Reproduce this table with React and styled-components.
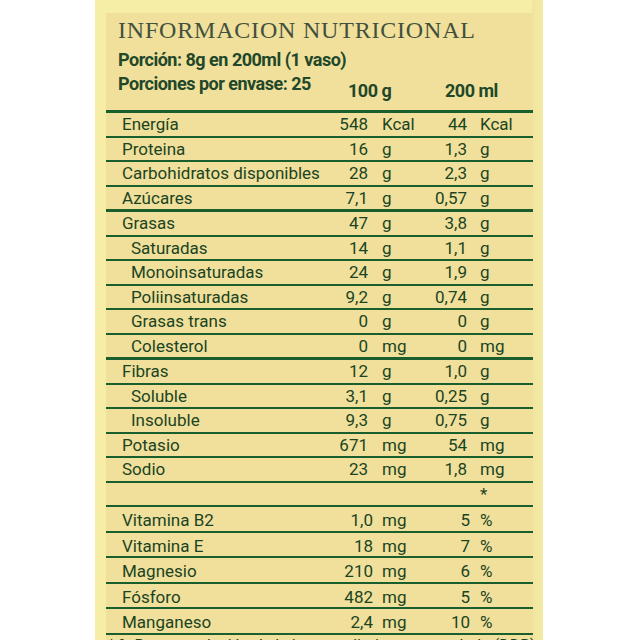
import React from "react";
import styled, { createGlobalStyle, css } from "styled-components";

const Global = createGlobalStyle`
  html, body { margin: 0; padding: 0; background: #ffffff; }
  body { font-family: Roboto, "Liberation Sans", sans-serif; }
`;

const Page = styled.div`
  width: 640px;
  height: 640px;
  overflow: hidden;
  display: flex;
  padding-left: 95px;
  box-sizing: border-box;
`;

const Label = styled.div`
  width: 448px;
  height: 640px;
  box-sizing: border-box;
  padding: 13px 10px 0 11px;
  background: linear-gradient(to right, #f6eea6 0, #f6eea6 436px, #f1e59f 438px, #f4eba3 448px);
  display: flex;
  flex-direction: column;
`;

const Inner = styled.div`
  flex: 1;
  background: #f0e09b;
  display: flex;
  flex-direction: column;
  color: #1b4423;
`;

const Title = styled.h1`
  margin: 3px 0 4px 12px;
  font-family: "Liberation Serif", "Times New Roman", serif;
  font-weight: normal;
  font-size: 24px;
  line-height: 28px;
  letter-spacing: 0.8px;
  color: #43503e;
`;

const boldLine = css`
  font-weight: 700;
  font-size: 18px;
  line-height: 24px;
  letter-spacing: -0.5px;
  color: #22472a;
`;

const Serving = styled.div`
  padding-left: 12px;
  ${boldLine}
`;

const HeadRow = styled.div`
  display: grid;
  grid-template-columns: 230px 97px auto;
  padding-left: 12px;
  margin-bottom: 7px;
  ${boldLine}
`;

const ColHead = styled.div`
  padding-top: 7px;
`;

const Table = styled.div`
  border-top: 3px solid #1b5e2d;
  display: flex;
  flex-direction: column;
`;

const gridTop = css`
  grid-template-columns: 196px 66px 56px 43px 66px;
`;
const gridVit = css`
  grid-template-columns: 196px 71px 54px 43px 63px;
`;

const Row = styled.div`
  display: grid;
  ${(p) => (p.$vit ? gridVit : gridTop)}
  height: ${(p) => (p.$vit ? "21.5px" : "22.5px")};
  padding-top: ${(p) => (p.$vit ? "2px" : "0")};
  border-bottom: ${(p) => (p.$thick ? "3px" : "2px")} solid #1b5e2d;
  font-size: 17px;
  line-height: 22.5px;
  box-sizing: content-box;
`;

const Name = styled.div`
  padding-left: ${(p) => (p.$sub ? "25px" : "16px")};
  white-space: nowrap;
`;

const Num = styled.div`
  text-align: right;
`;

const Unit = styled.div`
  padding-left: ${(p) => p.$pl}px;
`;

const Foot = styled.div`
  margin-top: 1px;
  padding-left: 2px;
  font-size: 16px;
  line-height: 20px;
  white-space: nowrap;
`;

const nutrients = [
  { n: "Energía", a: "548", au: "Kcal", b: "44", bu: "Kcal" },
  { n: "Proteina", a: "16", au: "g", b: "1,3", bu: "g" },
  { n: "Carbohidratos disponibles", a: "28", au: "g", b: "2,3", bu: "g" },
  { n: "Azúcares", a: "7,1", au: "g", b: "0,57", bu: "g", thick: true },
  { n: "Grasas", a: "47", au: "g", b: "3,8", bu: "g" },
  { n: "Saturadas", sub: true, a: "14", au: "g", b: "1,1", bu: "g" },
  { n: "Monoinsaturadas", sub: true, a: "24", au: "g", b: "1,9", bu: "g" },
  { n: "Poliinsaturadas", sub: true, a: "9,2", au: "g", b: "0,74", bu: "g" },
  { n: "Grasas trans", sub: true, a: "0", au: "g", b: "0", bu: "g" },
  { n: "Colesterol", sub: true, a: "0", au: "mg", b: "0", bu: "mg", thick: true },
  { n: "Fibras", a: "12", au: "g", b: "1,0", bu: "g" },
  { n: "Soluble", sub: true, a: "3,1", au: "g", b: "0,25", bu: "g" },
  { n: "Insoluble", sub: true, a: "9,3", au: "g", b: "0,75", bu: "g" },
  { n: "Potasio", a: "671", au: "mg", b: "54", bu: "mg" },
  { n: "Sodio", a: "23", au: "mg", b: "1,8", bu: "mg" },
];

const vitamins = [
  { n: "Vitamina B2", a: "1,0", au: "mg", b: "5", bu: "%" },
  { n: "Vitamina E", a: "18", au: "mg", b: "7", bu: "%" },
  { n: "Magnesio", a: "210", au: "mg", b: "6", bu: "%" },
  { n: "Fósforo", a: "482", au: "mg", b: "5", bu: "%" },
  { n: "Manganeso", a: "2,4", au: "mg", b: "10", bu: "%" },
];

export default function App() {
  return (
    <>
      <Global />
      <Page>
        <Label>
          <Inner>
            <Title>INFORMACION NUTRICIONAL</Title>
            <Serving>Porción: 8g en 200ml (1 vaso)</Serving>
            <HeadRow>
              <div>Porciones por envase: 25</div>
              <ColHead>100 g</ColHead>
              <ColHead>200 ml</ColHead>
            </HeadRow>
            <Table>
              {nutrients.map((r) => (
                <Row key={r.n} $thick={r.thick}>
                  <Name $sub={r.sub}>{r.n}</Name>
                  <Num>{r.a}</Num>
                  <Unit $pl={14}>{r.au}</Unit>
                  <Num>{r.b}</Num>
                  <Unit $pl={13}>{r.bu}</Unit>
                </Row>
              ))}
              <Row>
                <Name />
                <Num />
                <Unit $pl={14} />
                <Num />
                <Unit $pl={13}>*</Unit>
              </Row>
              {vitamins.map((r) => (
                <Row key={r.n} $vit>
                  <Name>{r.n}</Name>
                  <Num>{r.a}</Num>
                  <Unit $pl={9}>{r.au}</Unit>
                  <Num>{r.b}</Num>
                  <Unit $pl={10}>{r.bu}</Unit>
                </Row>
              ))}
            </Table>
            <Foot>* % Recomendación de la ingesta diaria recomendada (DDR)</Foot>
          </Inner>
        </Label>
      </Page>
    </>
  );
}
